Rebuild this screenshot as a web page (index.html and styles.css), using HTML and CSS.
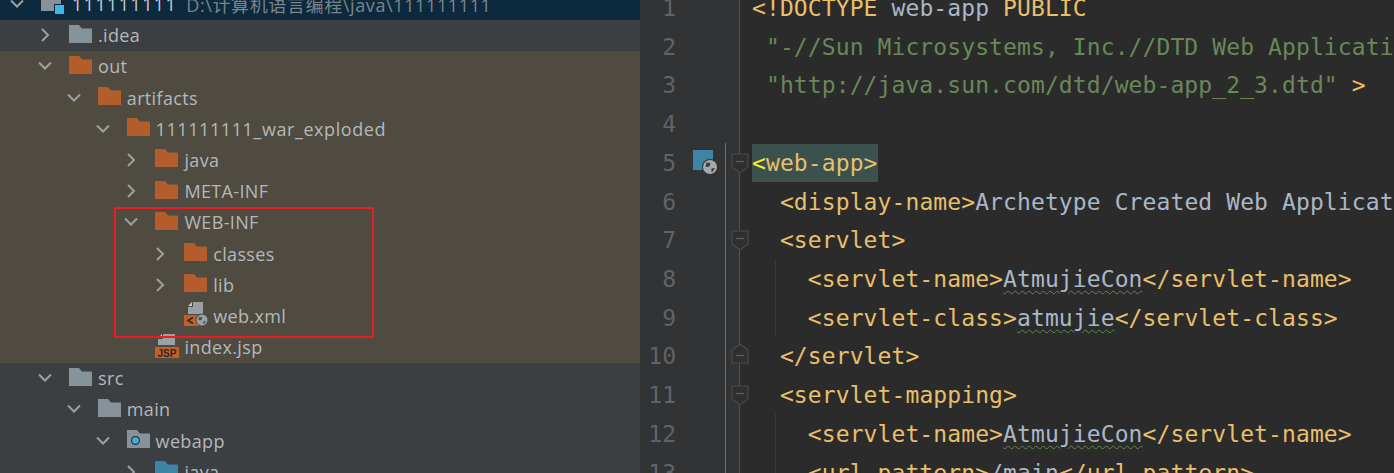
FILE: index.html
```html
<!DOCTYPE html>
<html lang="en">
<head>
<meta charset="utf-8">
<title>web.xml</title>
<link rel="stylesheet" href="styles.css">
</head>
<body>
<svg width="0" height="0" class="defs">
  <symbol id="folder" viewBox="0 0 23 18"><path d="M0 0h10l3 3.500h10V18H0z" fill="currentColor"/></symbol>
  <symbol id="open" viewBox="0 0 14 14"><path d="M1 3.500L7 9.500l6-6" fill="none" stroke="#9da0a2" stroke-width="2"/></symbol>
  <symbol id="closed" viewBox="0 0 14 14"><path d="M4 1l6 6-6 6" fill="none" stroke="#9da0a2" stroke-width="2"/></symbol>
</svg>
<main class="ide">
  <aside class="tree">
    <div class="row root"><svg class="arrow"><use href="#open"/></svg><span class="module"><i></i><b></b></span><span class="strong">111111111</span><span class="path">D:\计算机语言编程\java\111111111</span></div>
    <div class="row" style="--d:0"><svg class="arrow"><use href="#closed"/></svg><svg class="folder grey"><use href="#folder"/></svg><span class="name">.idea</span></div>
    <div class="excluded">
      <div class="row" style="--d:0"><svg class="arrow"><use href="#open"/></svg><svg class="folder orange"><use href="#folder"/></svg><span class="name">out</span></div>
      <div class="row" style="--d:1"><svg class="arrow"><use href="#open"/></svg><svg class="folder orange"><use href="#folder"/></svg><span class="name">artifacts</span></div>
      <div class="row" style="--d:2"><svg class="arrow"><use href="#open"/></svg><svg class="folder orange"><use href="#folder"/></svg><span class="name long">111111111_war_exploded</span></div>
      <div class="row" style="--d:3"><svg class="arrow"><use href="#closed"/></svg><svg class="folder orange"><use href="#folder"/></svg><span class="name">java</span></div>
      <div class="row" style="--d:3"><svg class="arrow"><use href="#closed"/></svg><svg class="folder orange"><use href="#folder"/></svg><span class="name">META-INF</span></div>
      <div class="row" style="--d:3"><svg class="arrow"><use href="#open"/></svg><svg class="folder orange"><use href="#folder"/></svg><span class="name">WEB-INF</span></div>
      <div class="row" style="--d:4"><svg class="arrow"><use href="#closed"/></svg><svg class="folder orange"><use href="#folder"/></svg><span class="name">classes</span></div>
      <div class="row" style="--d:4"><svg class="arrow"><use href="#closed"/></svg><svg class="folder orange"><use href="#folder"/></svg><span class="name">lib</span></div>
      <div class="row" style="--d:4"><span class="arrow"></span>
        <svg class="fileicon" viewBox="0 0 24 24"><path d="M9 0h10v12H4V5h5z" fill="#9aa1a6"/><path d="M4 4l4-4v4z" fill="#c4c8ca"/><rect x="0" y="13" width="15" height="11" fill="#c35f28"/><path d="M9 15.500l-5 3 5 3" fill="none" stroke="#2e2a26" stroke-width="1.600"/><circle cx="18" cy="18" r="6.500" fill="#4f4b41"/><circle cx="18" cy="18" r="5.500" fill="#9aa1a6"/><path d="M15 15l3.500.5-1 2.500-3 .3zM19.500 19.500l2.500-.5-2 3-1-.5z" fill="#4f4b41"/></svg>
        <span class="name">web.xml</span></div>
      <div class="row" style="--d:3"><span class="arrow"></span>
        <svg class="fileicon" viewBox="0 0 24 24"><path d="M8 0h12v11H3V5h5z" fill="#9aa1a6"/><path d="M3 4l4-4v4z" fill="#c4c8ca"/><rect x="0" y="13" width="24" height="11" fill="#c35f28"/><text x="12" y="22.500" class="jsp">JSP</text></svg>
        <span class="name">index.jsp</span></div>
    </div>
    <div class="row" style="--d:0"><svg class="arrow"><use href="#open"/></svg><svg class="folder grey"><use href="#folder"/></svg><span class="name">src</span></div>
    <div class="row" style="--d:1"><svg class="arrow"><use href="#open"/></svg><svg class="folder grey"><use href="#folder"/></svg><span class="name">main</span></div>
    <div class="row" style="--d:2"><svg class="arrow"><use href="#open"/></svg>
      <svg class="folder grey" viewBox="0 0 23 18"><path d="M0 0h10l3 3.500h10V18H0z" fill="currentColor"/><circle cx="8.500" cy="10.500" r="4.500" fill="#2f3336"/><circle cx="8.500" cy="10.500" r="3.300" fill="#3daee9"/></svg>
      <span class="name">webapp</span></div>
    <div class="row" style="--d:3"><svg class="arrow"><use href="#closed"/></svg><svg class="folder teal"><use href="#folder"/></svg><span class="name">java</span></div>
  </aside>
  <section class="editor">
    <div class="numbers">
      <div>1</div><div>2</div><div>3</div><div>4</div><div>5</div><div>6</div><div>7</div><div>8</div><div>9</div><div>10</div><div>11</div><div>12</div><div>13</div>
    </div>
    <div class="gutter-icon"><svg viewBox="0 0 26 26" width="26" height="26"><rect x="0" y="0" width="20" height="20" fill="#3d85a6"/><circle cx="17" cy="17" r="8" fill="#313335"/><circle cx="17" cy="17" r="7" fill="#a5a9ad"/><path d="M13.500 12.500l4 .5-1 3.500-4 .5zM18.500 18.500l3.500-.5-2.500 4-1.200-.5z" fill="#3a3d40"/></svg></div>
    <div class="folds">
      <svg class="fold f5" viewBox="0 0 18 21"><path d="M1 1h16v13l-8 6-8-6z"/><path class="minus" d="M5 8.500h8"/></svg>
      <svg class="fold f7" viewBox="0 0 18 21"><path d="M1 1h16v13l-8 6-8-6z"/><path class="minus" d="M5 8.500h8"/></svg>
      <svg class="fold f10" viewBox="0 0 18 21"><path d="M1 20h16V7L9 1 1 7z"/><path class="minus" d="M5 12.500h8"/></svg>
      <svg class="fold f11" viewBox="0 0 18 21"><path d="M1 1h16v13l-8 6-8-6z"/><path class="minus" d="M5 8.500h8"/></svg>
    </div>
    <div class="code">
      <div class="guide g1"></div><div class="guide g2"></div>
<pre class="line"><span class="t">&lt;!DOCTYPE</span> <span class="a">web-app</span> <span class="t">PUBLIC</span></pre>
<pre class="line"> <span class="s">"-//Sun Microsystems, Inc.//DTD Web Application 2.3//EN"</span></pre>
<pre class="line"> <span class="s">"http://java.sun.com/dtd/web-app_2_3.dtd"</span> <span class="t">&gt;</span></pre>
<pre class="line"> </pre>
<pre class="line"><span class="match"><span class="y">&lt;</span><span class="t">web-app&gt;</span></span></pre>
<pre class="line">  <span class="t">&lt;display-name&gt;</span><span class="a">Archetype Created Web Application</span></pre>
<pre class="line">  <span class="t">&lt;servlet&gt;</span></pre>
<pre class="line">    <span class="t">&lt;servlet-name&gt;</span><span class="a"><u>AtmujieCon</u></span><span class="t">&lt;/servlet-name&gt;</span></pre>
<pre class="line">    <span class="t">&lt;servlet-class&gt;</span><span class="a"><u>atmujie</u></span><span class="t">&lt;/servlet-class&gt;</span></pre>
<pre class="line">  <span class="t">&lt;/servlet&gt;</span></pre>
<pre class="line">  <span class="t">&lt;servlet-mapping&gt;</span></pre>
<pre class="line">    <span class="t">&lt;servlet-name&gt;</span><span class="a"><u>AtmujieCon</u></span><span class="t">&lt;/servlet-name&gt;</span></pre>
<pre class="line">    <span class="t">&lt;url-pattern&gt;</span><span class="a">/main</span><span class="t">&lt;/url-pattern&gt;</span></pre>
    </div>
  </section>
  <div class="annotation"></div>
</main>
</body>
</html>
```
FILE: styles.css
```css
html, body { margin: 0; padding: 0; background: #2b2b2b; }
body { width: 1394px; height: 473px; overflow: hidden; }
.defs { position: absolute; }
.ide { position: relative; display: flex; width: 1394px; height: 473px; overflow: hidden; }

.tree { width: 640px; flex: none; background: #3c3f41; margin-top: -11px; font-family: "Open Sans", "Noto Sans", sans-serif; font-size: 18px; color: #b4b8ba; }
.row { display: flex; align-items: center; height: 31.2px; padding-left: calc(38px + var(--d) * 28.8px); white-space: nowrap; }
.root { background: #0d293e; padding-left: 10px; height: 30.600px; }
.excluded { background: #4f4b41; }
.arrow { width: 14px; height: 14px; flex: none; margin-right: 17px; }
.folder { width: 23px; height: 18px; flex: none; margin-right: 6px; margin-top: -3px; }
.grey { color: #87939a; }
.orange { color: #b35c2c; }
.teal { color: #3d85a6; }
.fileicon { width: 24px; height: 24px; flex: none; margin-right: 5px; margin-top: -3px; }
.jsp { font: bold 10px "Liberation Sans", sans-serif; fill: #2e2a26; text-anchor: middle; }
.name { letter-spacing: 0.35px; }
.long { letter-spacing: 0.58px; }
.strong { color: #c8ccce; letter-spacing: 1.4px; }
.path { color: #7c8488; margin-left: 9px; font-family: "Open Sans", "Noto Sans CJK SC", sans-serif; font-size: 18px; letter-spacing: 0.62px; }
.module { position: relative; width: 24px; height: 22px; flex: none; margin-right: 7px; }
.module i { position: absolute; left: 0; top: 0; width: 20px; height: 18px; background: #87939a; }
.module b { position: absolute; right: 0; bottom: 0; width: 9px; height: 9px; background: #3db7ea; border: 1px solid #0d293e; }

.editor { position: relative; flex: 1; display: flex; margin-top: -11px; background: #2b2b2b; min-width: 0; }
.numbers { width: 85px; flex: none; box-sizing: border-box; background: #313335; padding-right: 49px; text-align: right; color: #606366; font: 23px/38.72px "DejaVu Sans Mono", monospace; height: 520px; }
.gutter-icon { position: absolute; left: 53px; top: 161px; }
.folds { width: 27px; flex: none; position: relative; box-sizing: border-box; height: 520px; background: linear-gradient(to right, #313335 0, #313335 15px, #2b2b2b 15px); }
.folds::before { content: ""; position: absolute; left: 0; top: 154px; bottom: 0; width: 1px; background: #4a7c78; }
.folds::after { content: ""; position: absolute; left: 14px; top: 0; bottom: 0; width: 1px; background: #505050; }
.fold { position: absolute; left: 6px; width: 18px; height: 21px; z-index: 1; fill: #2e2f30; stroke: #4a4a4a; stroke-width: 1.200; }
.fold .minus { stroke: #5f5f5f; fill: none; }
.f5 { top: 164px; }
.f7 { top: 241px; }
.f10 { top: 354px; }
.f11 { top: 396px; }

.code { position: relative; flex: 1; font: 23px/38.72px "DejaVu Sans Mono", monospace; letter-spacing: 0.1px; color: #a9b7c6; overflow: hidden; }
.line { margin: 0; height: 38.72px; font: inherit; white-space: pre; }
.t { color: #e8bf6a; }
.y { color: #ffef28; }
.a { color: #a9b7c6; }
.s { color: #6a8759; }
.match { background: #3b514d; display: inline-block; height: 38px; margin-left: -1px; padding-left: 1px; }
u { text-decoration: underline wavy #5a8a4f 1px; text-underline-offset: 3px; }
.guide { position: absolute; left: 23px; width: 1px; background: #3a3a3a; }
.g1 { top: 270px; height: 77px; }
.g2 { top: 425px; height: 100px; }

.annotation { position: absolute; left: 114px; top: 207px; width: 260px; height: 131px; box-sizing: border-box; border: 2px solid #ed1c24; }
```
